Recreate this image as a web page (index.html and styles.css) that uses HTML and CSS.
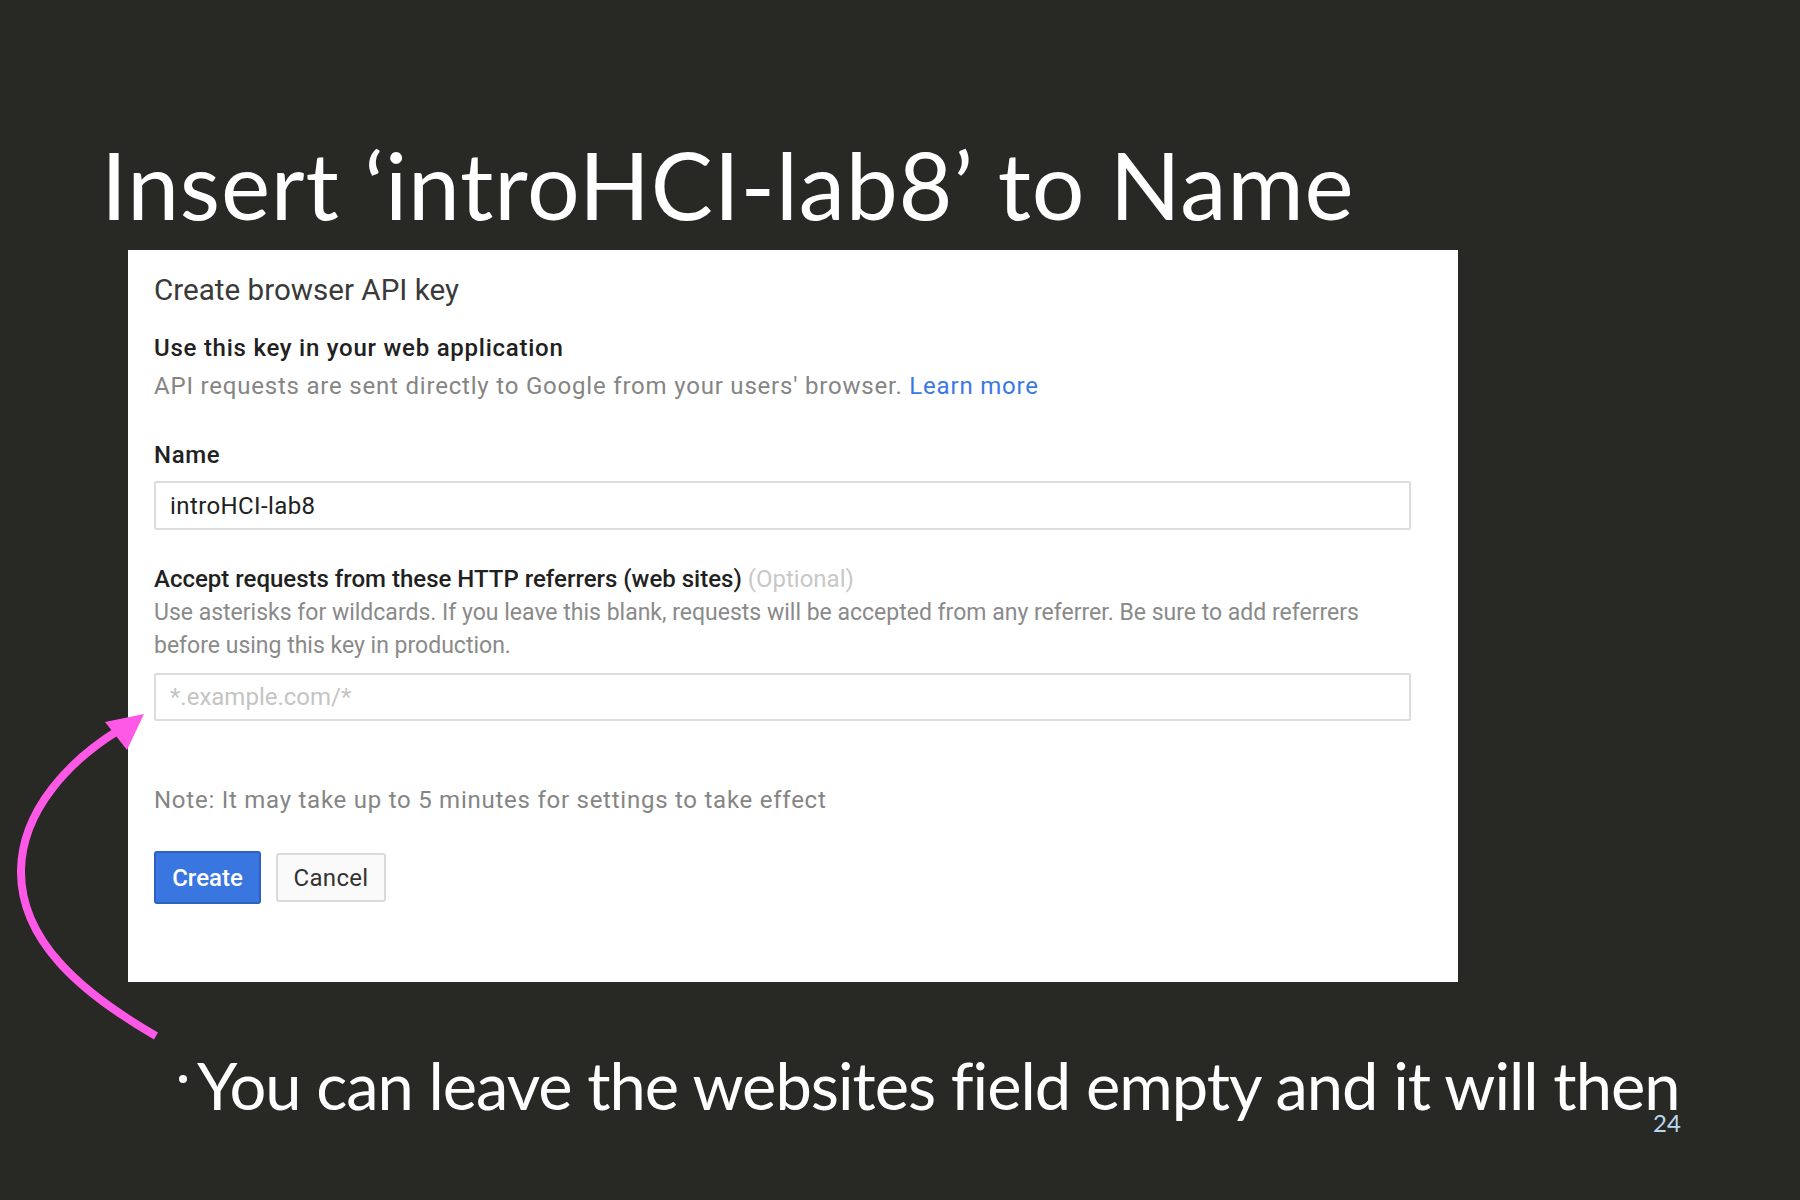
FILE: index.html
```html
<!DOCTYPE html>
<html>
<head>
<meta charset="utf-8">
<link rel="stylesheet" href="styles.css">
</head>
<body>
<div class="slide">
  <h1 class="slide-title">Insert ‘introHCI-lab8’ to Name</h1>
  <div class="panel">
    <div class="panel-title">Create browser API key</div>
    <div class="section-head">Use this key in your web application</div>
    <div class="desc">API requests are sent directly to Google from your users' browser. <span class="link">Learn more</span></div>
    <div class="label label-name">Name</div>
    <div class="field field-name"><span class="value">introHCI-lab8</span></div>
    <div class="label label-ref">Accept requests from these HTTP referrers (web sites) <span class="optional">(Optional)</span></div>
    <div class="help">Use asterisks for wildcards. If you leave this blank, requests will be accepted from any referrer. Be sure to add referrers<br>before using this key in production.</div>
    <div class="field field-ref"><span class="placeholder">*.example.com/*</span></div>
    <div class="note">Note: It may take up to 5 minutes for settings to take effect</div>
    <div class="buttons">
      <div class="btn btn-create">Create</div>
      <div class="btn btn-cancel">Cancel</div>
    </div>
  </div>
  <div class="bullet"><span class="dot"></span><span class="bullet-text">You can leave the websites field empty and it will then</span></div>
  <div class="page-num">24</div>
  <svg class="arrow" width="200" height="360" viewBox="0 700 200 360" xmlns="http://www.w3.org/2000/svg">
    <path d="M156,1036 C80,992 20,940 21,870 C22,810 70,760 119,730" fill="none" stroke="#fd58e6" stroke-width="8"/>
    <polygon points="144,714 105,722 127,750" fill="#fd58e6"/>
  </svg>
</div>
</body>
</html>
```

FILE: styles.css
```css
html, body {
  margin: 0;
  padding: 0;
}
body {
  background: #282824;
  width: 1800px;
  height: 1200px;
  overflow: hidden;
}
.slide {
  position: relative;
  width: 1800px;
  height: 1200px;
  padding-top: 138px;
  box-sizing: border-box;
}
.slide-title {
  margin: 0 0 19px 101px;
  font-family: Lato, "Noto Sans", sans-serif;
  font-weight: 400;
  font-size: 93px;
  line-height: 93px;
  height: 93px;
  letter-spacing: 0.8px;
  color: #ffffff;
  white-space: nowrap;
}
.panel {
  margin-left: 128px;
  width: 1330px;
  height: 732px;
  background: #ffffff;
  box-sizing: border-box;
  padding: 20px 47px 0 26px;
  display: flex;
  flex-direction: column;
  font-family: Roboto, "Liberation Sans", sans-serif;
  font-size: 24px;
  color: #757575;
  white-space: nowrap;
}
.panel-title {
  font-size: 29.6px;
  line-height: 40px;
  color: #3a3a3a;
}
.section-head {
  margin-top: 22px;
  line-height: 33px;
  font-weight: 500;
  letter-spacing: 0.75px;
  color: #212121;
}
.desc {
  margin-top: 5px;
  line-height: 33px;
  letter-spacing: 0.8px;
  color: #858585;
}
.link {
  color: #3b78e7;
}
.label {
  line-height: 33px;
  font-weight: 500;
  color: #212121;
}
.label-name {
  margin-top: 36px;
  letter-spacing: 0.6px;
}
.label-ref {
  margin-top: 33px;
}
.optional {
  font-weight: 400;
  color: #c8c8c8;
}
.field {
  border: 2px solid #dcdcdc;
  border-radius: 2px;
  box-sizing: border-box;
  display: flex;
  align-items: center;
  padding-left: 14px;
}
.field-name {
  margin-top: 9px;
  height: 49px;
}
.field-ref {
  margin-top: 11px;
  height: 48px;
}
.value {
  color: #212121;
  letter-spacing: 0.4px;
}
.placeholder {
  color: #c4c4c4;
}
.help {
  font-size: 23px;
  line-height: 33px;
  letter-spacing: 0;
  color: #8a8a8a;
}
.note {
  margin-top: 63px;
  line-height: 33px;
  letter-spacing: 0.75px;
  color: #858585;
}
.buttons {
  margin-top: 34px;
  display: flex;
  align-items: center;
  gap: 15px;
}
.btn {
  box-sizing: border-box;
  display: flex;
  align-items: center;
  justify-content: center;
  border-radius: 3px;
}
.btn-create {
  width: 107px;
  height: 53px;
  background: #3a76e0;
  border: 2px solid #2d60c4;
  color: #ffffff;
  font-weight: 500;
}
.btn-cancel {
  width: 110px;
  height: 49px;
  background: #fafafa;
  border: 2px solid #dadada;
  color: #333333;
  letter-spacing: 0.3px;
}
.bullet {
  margin-top: 69px;
  margin-left: 179px;
  display: flex;
  align-items: baseline;
  font-family: Lato, "Noto Sans", sans-serif;
  font-size: 65px;
  line-height: 68px;
  letter-spacing: -1px;
  color: #ffffff;
  white-space: nowrap;
}
.dot {
  display: block;
  align-self: flex-start;
  width: 8px;
  height: 8px;
  border-radius: 50%;
  background: #ffffff;
  margin-top: 24px;
  margin-right: 10px;
}
.page-num {
  position: absolute;
  left: 1653px;
  top: 1107px;
  font-family: Lato, "Noto Sans", sans-serif;
  font-size: 24px;
  line-height: 32px;
  color: #b8d6ee;
}
.arrow {
  position: absolute;
  left: 0;
  top: 700px;
}
```
